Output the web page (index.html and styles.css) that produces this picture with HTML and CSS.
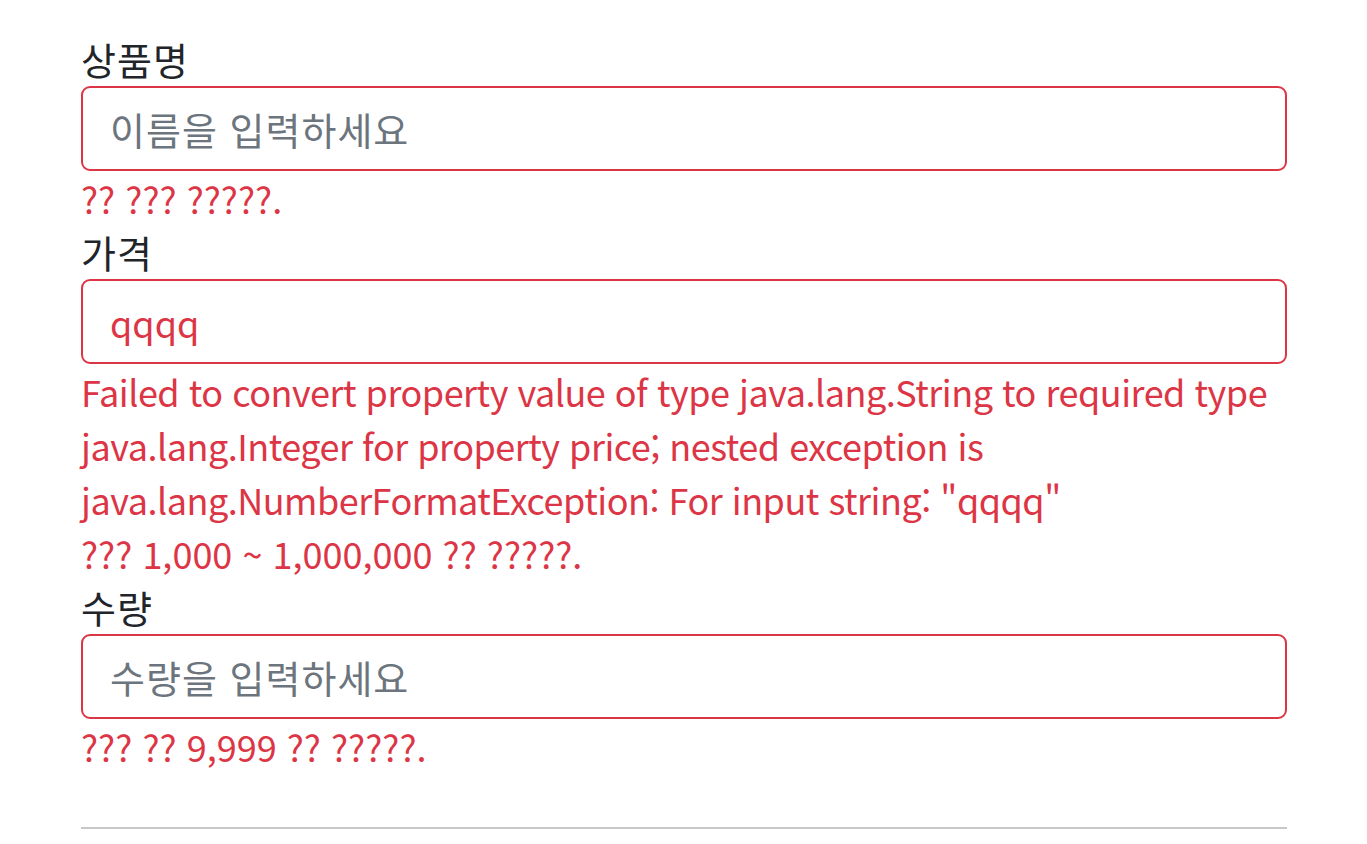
FILE: index.html
```html
<!DOCTYPE html>
<html lang="ko">
<head>
    <meta charset="UTF-8">
    <meta name="viewport" content="width=device-width, initial-scale=1.0">
    <title>상품 등록 폼</title>
    <link rel="stylesheet" href="styles.css">
</head>
<body>
    <div class="container">
        <form class="item-form" action="" method="post">
            <div class="field">
                <label for="itemName">상품명</label>
                <input type="text" id="itemName" class="form-control field-error" placeholder="이름을 입력하세요">
                <div class="field-error-msg">?? ??? ?????.</div>
            </div>
            <div class="field">
                <label for="price">가격</label>
                <input type="text" id="price" class="form-control field-error" value="qqqq">
                <div class="field-error-msg tight">Failed to convert property value of type java.lang.String to required type java.lang.Integer for property price; nested exception is java.lang.NumberFormatException: For input string: "qqqq"</div>
                <div class="field-error-msg">??? 1,000 ~ 1,000,000 ?? ?????.</div>
            </div>
            <div class="field">
                <label for="quantity">수량</label>
                <input type="text" id="quantity" class="form-control field-error" placeholder="수량을 입력하세요">
                <div class="field-error-msg">??? ?? 9,999 ?? ?????.</div>
            </div>

            <hr class="divider">
        </form>
    </div>
</body>
</html>
```

FILE: styles.css
```css
body {
    margin: 0;
    font-family: "Noto Sans CJK KR", "Noto Sans", sans-serif;
    font-size: 36px;
    line-height: 54px;
    color: #212529;
    background: #fff;
}

.container {
    width: 1206px;
    margin: 0 auto;
    padding: 32px 0 0 1px;
}

.field label {
    display: block;
    font-size: 38px;
    letter-spacing: 1px;
}

.form-control {
    display: block;
    box-sizing: border-box;
    width: 100%;
    height: 85px;
    padding: 13px 27px;
    font-family: inherit;
    font-size: 36px;
    line-height: 54px;
    color: #495057;
    background: #fff;
    border: 2px solid #ced4da;
    border-radius: 9px;
    outline: none;
}

.form-control::placeholder {
    color: #6c757d;
    font-size: 38px;
    letter-spacing: 1px;
}

.field-error {
    border-color: #dc3545;
    color: #dc3545;
}

.field-error-msg {
    color: #dc3545;
}

.field-error-msg.tight {
    letter-spacing: -0.5px;
}

.divider {
    margin: 54px 0 0;
    border: 0;
    border-top: 2px solid #c8c8c8;
}
```
